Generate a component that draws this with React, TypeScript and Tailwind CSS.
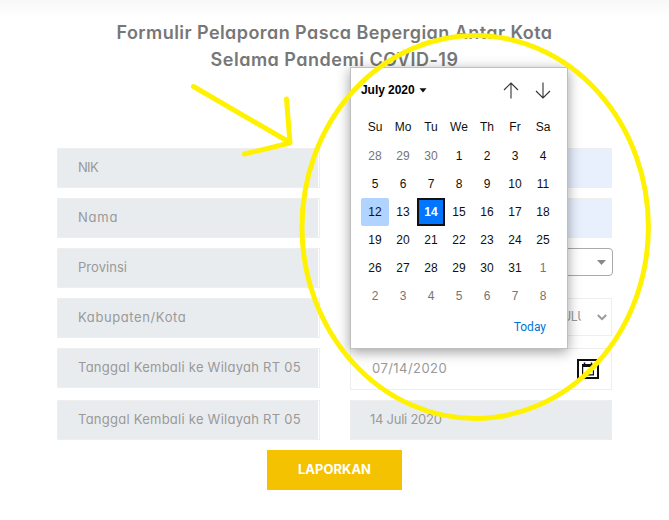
import React from "react";

type DayTone = "muted" | "normal" | "today" | "selected";

const weekdays = ["Su", "Mo", "Tu", "We", "Th", "Fr", "Sa"];

const days: { label: number; tone: DayTone }[] = [
  ...[28, 29, 30].map((label) => ({ label, tone: "muted" as DayTone })),
  ...Array.from({ length: 31 }, (_, i) => ({
    label: i + 1,
    tone: (i + 1 === 12 ? "today" : i + 1 === 14 ? "selected" : "normal") as DayTone,
  })),
  ...[1, 2, 3, 4, 5, 6, 7, 8].map((label) => ({ label, tone: "muted" as DayTone })),
];

const toneClass: Record<DayTone, string> = {
  muted: "text-[#757575]",
  normal: "text-[#101010]",
  today: "rounded-[2px] bg-[#b0d3ff] text-[#101010]",
  selected: "border-2 border-[#101010] bg-[#0075ff] font-bold text-white",
};

function Label({ text, spacing }: { text: string; spacing: string }) {
  return (
    <div className="h-10 w-[263px] border border-[#eeeeee] bg-white pr-px">
      <div className="flex h-full items-center whitespace-nowrap bg-[#e9ecef] pl-5">
        <span className={spacing}>{text}</span>
      </div>
    </div>
  );
}

function Calendar() {
  return (
    <div className="absolute left-[350px] top-[67px] flex h-[282px] w-[218px] flex-col border border-[#bfbfbf] bg-white px-[10px] font-['Liberation_Sans',Arial,sans-serif] text-[12px] text-[#101010] shadow-[0_3px_12px_rgba(0,0,0,0.38)]">
      <div className="flex h-[44px] items-center">
        <span className="font-bold tracking-[-0.05px] text-black">July 2020</span>
        <svg className="ml-1 mt-px" width="8" height="5" viewBox="0 0 8 5">
          <path d="M0.5 0.3h7L4 4.6z" fill="#101010" />
        </svg>
        <svg className="ml-auto" width="16" height="17" viewBox="0 0 16 17" fill="none" stroke="#333" strokeWidth="1.1">
          <path d="M8 16.5V1M1 8l7-7 7 7" />
        </svg>
        <svg className="ml-4 mr-[6px]" width="16" height="17" viewBox="0 0 16 17" fill="none" stroke="#333" strokeWidth="1.1">
          <path d="M8 0.5V16M1 9l7 7 7-7" />
        </svg>
      </div>
      <div className="grid h-[30px] grid-cols-[repeat(7,28px)] items-center text-center">
        {weekdays.map((d) => (
          <span key={d}>{d}</span>
        ))}
      </div>
      <div className="grid grid-cols-[repeat(7,28px)] grid-rows-[repeat(6,28px)]">
        {days.map((d, i) => (
          <span key={i} className={"flex items-center justify-center " + toneClass[d.tone]}>
            {d.label}
          </span>
        ))}
      </div>
      <div className="flex flex-1 items-center justify-end pb-[4px] pr-[11px] font-[Roboto,sans-serif] text-[12px] text-[#0075d8]">
        Today
      </div>
    </div>
  );
}

export default function App() {
  return (
    <div className="relative h-[520px] w-[669px] overflow-hidden bg-[linear-gradient(#f8f8f8,#ffffff_18px)] font-[Inter,sans-serif] text-[13px] text-[#999999] [font-feature-settings:'cv11']">
      <h1 className="flex h-[148px] flex-col items-center pt-[19px] text-[18px] font-semibold leading-[27px] text-[#777777]">
        <span className="whitespace-nowrap tracking-[0.43px]">Formulir Pelaporan Pasca Bepergian Antar Kota</span>
        <span className="whitespace-nowrap tracking-[0.5px]">Selama Pandemi COVID-19</span>
      </h1>

      <div className="flex gap-[30px] pl-[57px]">
        <div className="flex flex-col gap-[10px]">
          <Label text="NIK" spacing="tracking-[-0.7px]" />
          <Label text="Nama" spacing="tracking-[0.8px]" />
          <Label text="Provinsi" spacing="tracking-[0.05px]" />
          <Label text="Kabupaten/Kota" spacing="tracking-[0.6px]" />
          <Label text="Tanggal Kembali ke Wilayah RT 05" spacing="tracking-[0.25px]" />
          <div className="pt-[2px]">
            <Label text="Tanggal Kembali ke Wilayah RT 05" spacing="tracking-[0.25px]" />
          </div>
        </div>
        <div className="flex w-[262px] flex-col">
          <div className="h-10 border border-[#eeeeee] bg-[#e8f0fe]" />
          <div className="mt-[10px] h-10 border border-[#eeeeee] bg-[#e8f0fe]" />
          <div className="mt-[10px] flex h-7 w-[263px] items-center justify-end rounded border border-[#aaaaaa] bg-white pr-[6px]">
            <svg width="9" height="5" viewBox="0 0 9 5">
              <path d="M0 0h9L4.5 5z" fill="#888" />
            </svg>
          </div>
          <div className="mt-[22px] flex h-[38px] items-center justify-end border border-[#eeeeee] bg-white pr-[4px]">
            <span className="w-[19px] overflow-hidden whitespace-nowrap text-[12.5px] tracking-[-0.6px]">ULU</span>
            <svg className="ml-[16px]" width="10" height="7" viewBox="0 0 10 7" fill="none" stroke="#999" strokeWidth="2">
              <path d="M0.8 1L5 5.2 9.2 1" />
            </svg>
          </div>
          <div className="mt-3 flex h-[42px] items-center justify-between border border-[#eeeeee] bg-white pl-[21px] pr-3">
            <span className="tracking-[0.45px]">07/14/2020</span>
            <div className="flex h-5 w-[22px] items-center justify-center border-2 border-[#101010]">
              <svg width="14" height="14" viewBox="0 0 14 14">
                <path d="M1 2h12v11.500H1zM2.200 5v7.300h9.600V5z" fill="#101010" fillRule="evenodd" />
                <path d="M3.500 0.500v3M10.500 0.500v3" stroke="#101010" strokeWidth="1.500" />
              </svg>
            </div>
          </div>
          <div className="mt-[10px] flex h-10 items-center border border-[#eeeeee] bg-[#e9ecef] pl-[19px]">
            <span className="tracking-[-0.25px]">14 Juli 2020</span>
          </div>
        </div>
      </div>

      <div className="flex pl-[267px] pt-[10px]">
        <button className="h-10 w-[135px] bg-[#f4c200] text-[13px] font-bold text-white">LAPORKAN</button>
      </div>

      <Calendar />

      <svg className="pointer-events-none absolute inset-0" width="669" height="520" viewBox="0 0 669 520" fill="none" stroke="#fff200" strokeWidth="5" strokeLinecap="round" strokeLinejoin="round">
        <ellipse cx="475.2" cy="227" rx="173.2" ry="191.5" />
        <path d="M193.5 86.5L290 142.5M286.5 99L290 143L244.5 154" />
      </svg>
    </div>
  );
}
